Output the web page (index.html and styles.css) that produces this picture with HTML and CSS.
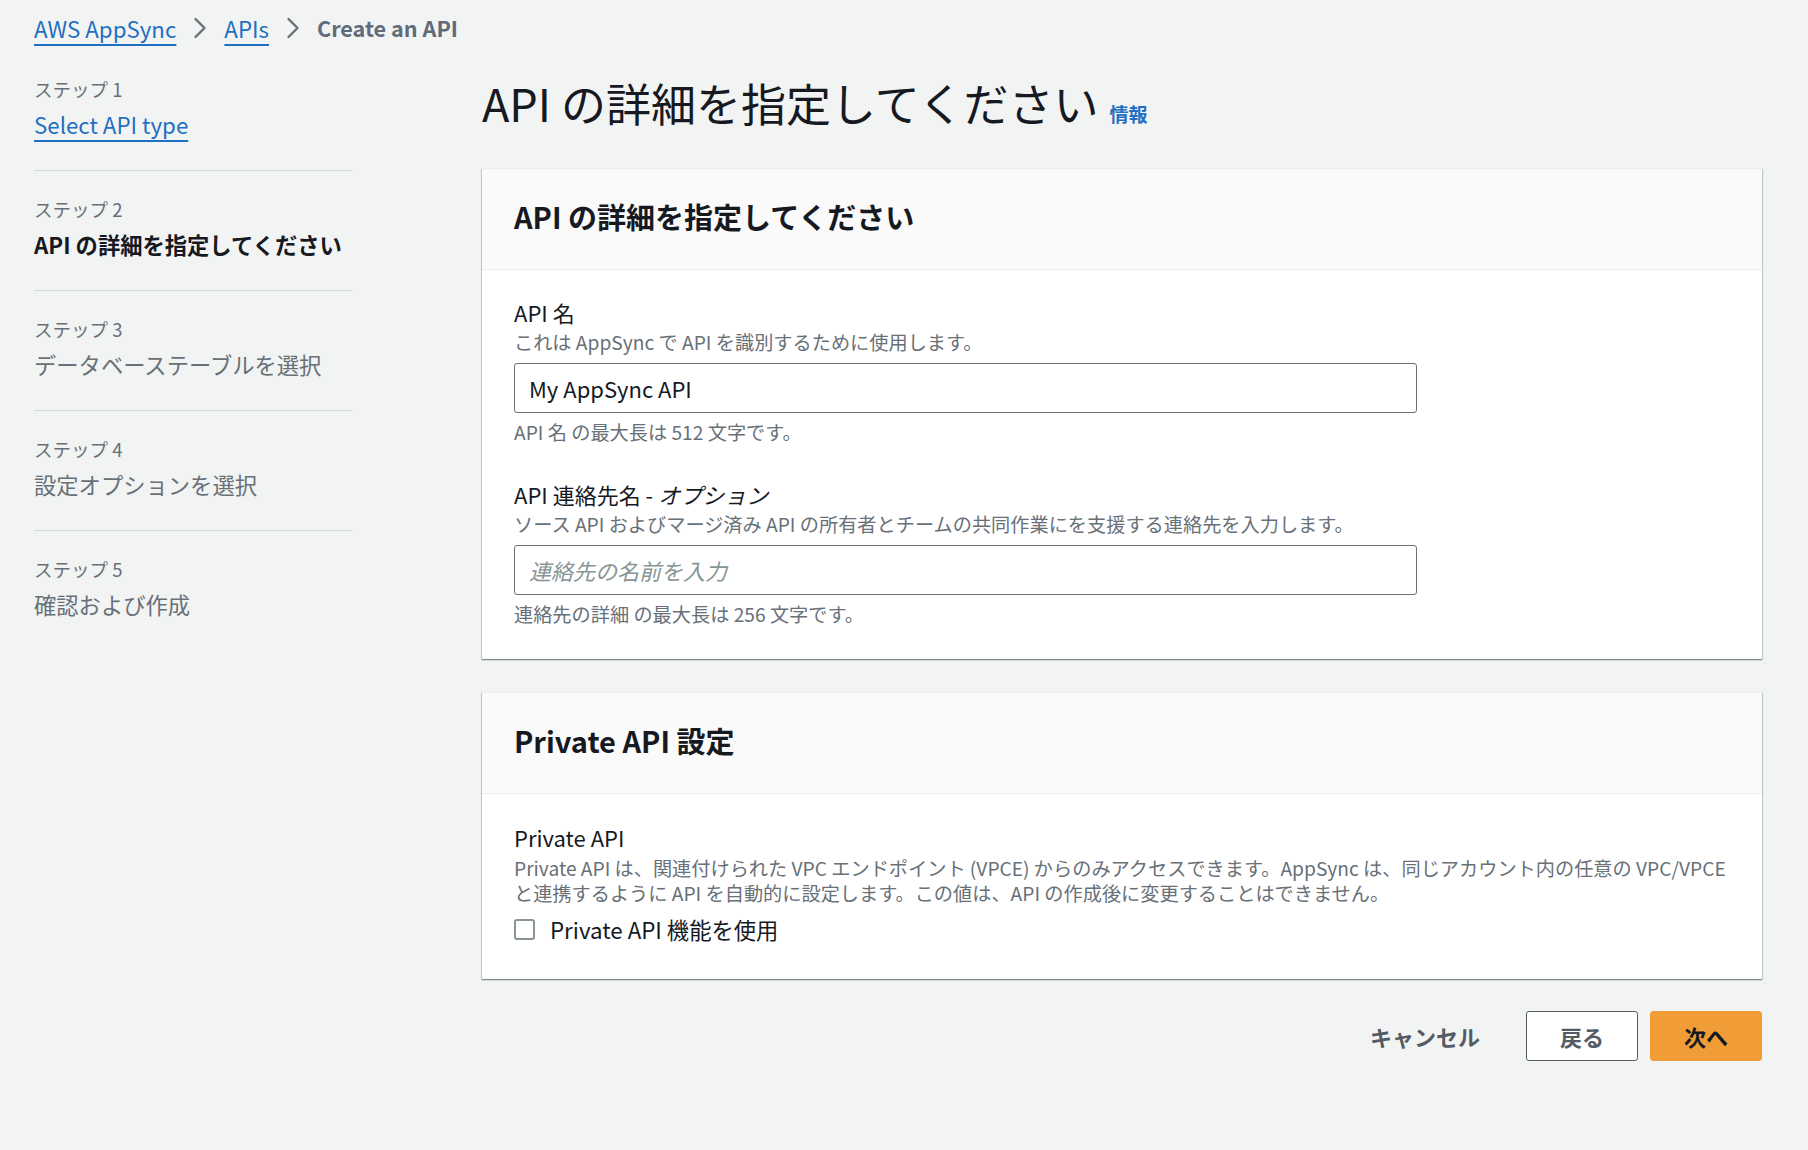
FILE: index.html
```html
<!DOCTYPE html>
<html lang="ja">
<head>
<meta charset="utf-8">
<title>Create an API</title>
<link rel="stylesheet" href="styles.css">
</head>
<body>
<div class="page">
  <nav class="breadcrumbs">
    <a class="crumb-link" href="#">AWS AppSync</a>
    <svg class="chev" viewBox="0 0 14 22" width="14" height="22"><polyline points="2.5,2 11.5,11 2.5,20" fill="none" stroke="#687078" stroke-width="2.4" stroke-linecap="round" stroke-linejoin="round"/></svg>
    <a class="crumb-link" href="#">APIs</a>
    <svg class="chev" viewBox="0 0 14 22" width="14" height="22"><polyline points="2.5,2 11.5,11 2.5,20" fill="none" stroke="#687078" stroke-width="2.4" stroke-linecap="round" stroke-linejoin="round"/></svg>
    <span class="crumb-current">Create an API</span>
  </nav>

  <div class="layout">
    <ol class="steps">
      <li class="step">
        <div class="step-label">ステップ 1</div>
        <a class="step-title step-link" href="#">Select API type</a>
      </li>
      <li class="step">
        <div class="step-label">ステップ 2</div>
        <div class="step-title step-active">API の詳細を指定してください</div>
      </li>
      <li class="step">
        <div class="step-label">ステップ 3</div>
        <div class="step-title">データベーステーブルを選択</div>
      </li>
      <li class="step">
        <div class="step-label">ステップ 4</div>
        <div class="step-title">設定オプションを選択</div>
      </li>
      <li class="step">
        <div class="step-label">ステップ 5</div>
        <div class="step-title">確認および作成</div>
      </li>
    </ol>

    <main class="main">
      <div class="page-header">
        <h1 class="page-title">API の詳細を指定してください</h1>
        <a class="info-link" href="#">情報</a>
      </div>

      <section class="card">
        <div class="card-header"><h2 class="card-title">API の詳細を指定してください</h2></div>
        <div class="card-body">
          <div class="field">
            <div class="field-label">API 名</div>
            <div class="field-desc">これは AppSync で API を識別するために使用します。</div>
            <div class="input">My AppSync API</div>
            <div class="field-constraint">API 名 の最大長は 512 文字です。</div>
          </div>
          <div class="field field-second">
            <div class="field-label">API 連絡先名 - <i>オプション</i></div>
            <div class="field-desc">ソース API およびマージ済み API の所有者とチームの共同作業にを支援する連絡先を入力します。</div>
            <div class="input input-placeholder">連絡先の名前を入力</div>
            <div class="field-constraint">連絡先の詳細 の最大長は 256 文字です。</div>
          </div>
        </div>
      </section>

      <section class="card card-second">
        <div class="card-header"><h2 class="card-title">Private API 設定</h2></div>
        <div class="card-body card-body-private">
          <div class="field-label">Private API</div>
          <div class="field-desc field-desc-wrap">Private API は、関連付けられた VPC エンドポイント (VPCE) からのみアクセスできます。AppSync は、同じアカウント内の任意の VPC/VPCE と連携するように API を自動的に設定します。この値は、API の作成後に変更することはできません。</div>
          <label class="checkbox-row"><span class="checkbox"></span><span class="checkbox-label">Private API 機能を使用</span></label>
        </div>
      </section>

      <div class="actions">
        <button class="btn btn-link">キャンセル</button>
        <button class="btn btn-normal">戻る</button>
        <button class="btn btn-primary">次へ</button>
      </div>
    </main>
  </div>
</div>
</body>
</html>
```

FILE: styles.css
```css
* { box-sizing: border-box; }
html, body {
  margin: 0;
  padding: 0;
  background: #f2f3f3;
  font-family: "Noto Sans CJK JP", "Noto Sans", sans-serif;
  color: #16191f;
}
.page {
  padding: 10px 46px 40px 34px;
}
.breadcrumbs {
  display: flex;
  align-items: center;
  height: 36px;
  font-size: 22.3px;
  line-height: 36px;
}
.crumb-link {
  color: #1f6fc3;
  text-decoration: underline;
  text-underline-offset: 6px;
  text-decoration-thickness: 2px;
}
.chev { margin: 0 17px 0 17px; }
.crumb-current {
  color: #5f6b7a;
  font-weight: 700;
  font-size: 21.6px;
}
.layout {
  display: grid;
  grid-template-columns: 319px 1fr;
  column-gap: 129px;
}
.steps {
  list-style: none;
  margin: 0;
  padding: 5px 0 0 0;
}
.step {
  padding: 25px 0 31px 0;
  border-bottom: 1px solid #d5dbdb;
}
.step:last-child { border-bottom: none; }
.step-label {
  font-size: 18.5px;
  line-height: 26px;
  color: #687078;
}
.step-title {
  display: block;
  margin-top: 7px;
  font-size: 22.3px;
  line-height: 30px;
  color: #687078;
}
.step-link {
  color: #1f6fc3;
  text-decoration: underline;
  text-underline-offset: 6px;
  text-decoration-thickness: 2px;
  margin-top: 7px;
}
.step-active {
  color: #16191f;
  font-weight: 700;
}
.main { min-width: 0; }
.page-header {
  display: flex;
  align-items: baseline;
  padding-top: 30px;
  margin-bottom: 38px;
}
.page-title {
  margin: 0;
  font-size: 45px;
  line-height: 54px;
  font-weight: 400;
  color: #16191f;
}
.info-link {
  margin-left: 11px;
  font-size: 19px;
  font-weight: 700;
  color: #1f6fc3;
  text-decoration: none;
}
.card {
  background: #fff;
  border-top: 1px solid #eaeded;
  box-shadow: 0 1px 1px 0 rgba(0, 28, 36, 0.3), 1px 1px 1px 0 rgba(0, 28, 36, 0.15), -1px 1px 1px 0 rgba(0, 28, 36, 0.15);
}
.card-second { margin-top: 33px; }
.card-header {
  background: #fafafa;
  border-bottom: 1px solid #eaeded;
  padding: 29px 32px 35px 32px;
}
.card-title {
  margin: 0;
  font-size: 29px;
  line-height: 36px;
  font-weight: 700;
}
.card-body {
  padding: 27px 32px 33px 32px;
}
.card-body-private { padding: 28px 32px 35px 32px; }
.field-second { margin-top: 35px; }
.field-label {
  font-size: 22px;
  line-height: 30px;
  color: #16191f;
}
.field-desc {
  margin-top: 3px;
  font-size: 19.2px;
  line-height: 24px;
  color: #687078;
}
.field-desc-wrap {
  margin-top: 4px;
  line-height: 25px;
}
.input {
  margin-top: 9px;
  width: 903px;
  height: 50px;
  border: 1px solid #687078;
  border-radius: 3px;
  background: #fff;
  padding: 0 14px;
  font-size: 22px;
  line-height: 48px;
  color: #16191f;
}
.input-placeholder {
  color: #879596;
  font-style: italic;
}
.field-constraint {
  margin-top: 7px;
  font-size: 19.2px;
  line-height: 24px;
  color: #687078;
}
.checkbox-row {
  display: flex;
  align-items: center;
  margin-top: 8px;
  height: 30px;
}
.checkbox {
  width: 21px;
  height: 21px;
  border: 2px solid #879596;
  border-radius: 3px;
  background: #fff;
}
.checkbox-label {
  margin-left: 15px;
  font-size: 22.3px;
  line-height: 30px;
}
.actions {
  display: flex;
  justify-content: flex-end;
  gap: 12px;
  margin-top: 32px;
}
.btn {
  height: 50px;
  padding: 0 33px;
  font-family: inherit;
  font-size: 22px;
  font-weight: 700;
  border-radius: 3px;
  border: 1px solid transparent;
  background: transparent;
  cursor: pointer;
}
.btn-link { color: #545b64; }
.btn-normal {
  background: #fff;
  border-color: #545b64;
  color: #545b64;
}
.btn-primary {
  background: #f09d38;
  border-color: #f09d38;
  color: #16191f;
}
```
